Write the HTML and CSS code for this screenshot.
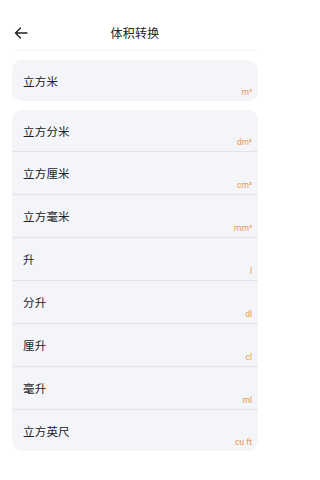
FILE: index.html
```html
<!DOCTYPE html>
<html lang="zh">
<head>
<meta charset="utf-8">
<link rel="stylesheet" href="styles.css">
</head>
<body>
<header class="topbar">
  <svg class="back" width="14" height="14" viewBox="0 0 14 14"><path d="M13 7H1.5M6.5 2L1.5 7l5 5" fill="none" stroke="#222" stroke-width="1.4" stroke-linecap="round" stroke-linejoin="round"/></svg>
  <h1 class="title">体积转换</h1>
</header>
<main class="content">
  <section class="card">
    <div class="row"><span class="name">立方米</span><span class="unit">m³</span></div>
  </section>
  <section class="card">
    <div class="row"><span class="name">立方分米</span><span class="unit">dm³</span></div>
    <div class="row"><span class="name">立方厘米</span><span class="unit">cm³</span></div>
    <div class="row"><span class="name">立方毫米</span><span class="unit">mm³</span></div>
    <div class="row"><span class="name">升</span><span class="unit">l</span></div>
    <div class="row"><span class="name">分升</span><span class="unit">dl</span></div>
    <div class="row"><span class="name">厘升</span><span class="unit">cl</span></div>
    <div class="row"><span class="name">毫升</span><span class="unit">ml</span></div>
    <div class="row"><span class="name">立方英尺</span><span class="unit">cu ft</span></div>
  </section>
</main>
</body>
</html>
```
FILE: styles.css
```css
* { box-sizing: border-box; }
html, body { margin: 0; padding: 0; background: #fff; }
body {
  font-family: "Noto Sans CJK SC", "Noto Sans", sans-serif;
  color: #222;
  width: 270px;
}
.topbar {
  margin: 16px 12px 0;
  height: 35px;
  display: grid;
  grid-template-columns: 1fr;
  align-items: center;
  border-bottom: 1px solid #f5f5f7;
}
.back {
  grid-area: 1 / 1;
  justify-self: start;
  margin-left: 2px;
  margin-bottom: 1px;
}
.title {
  grid-area: 1 / 1;
  justify-self: center;
  margin: 0 0 1px;
  font-size: 12px;
  font-weight: 400;
  line-height: 16px;
  letter-spacing: 0.2px;
}
.content {
  padding: 9px 12px 0;
  display: flex;
  flex-direction: column;
  gap: 9px;
}
.card {
  background: #f4f5f9;
  border-radius: 10px;
  overflow: hidden;
}
.row {
  height: 43px;
  display: grid;
  padding: 0 6px 4px 11px;
  border-top: 1px solid #e3e4e9;
}
.card .row:first-child { border-top: none; height: 41px; }
.card .row:last-child:not(:first-child) { height: 42px; }
.name {
  grid-area: 1 / 1;
  align-self: center;
  font-size: 11.5px;
  line-height: 16px;
  margin-top: 4px;
  letter-spacing: 0.2px;
}
.unit {
  grid-area: 1 / 1;
  align-self: end;
  justify-self: end;
  font-family: "Roboto", "Noto Sans", sans-serif;
  font-size: 8.5px;
  line-height: 10px;
  color: #e8964f;
}
```
